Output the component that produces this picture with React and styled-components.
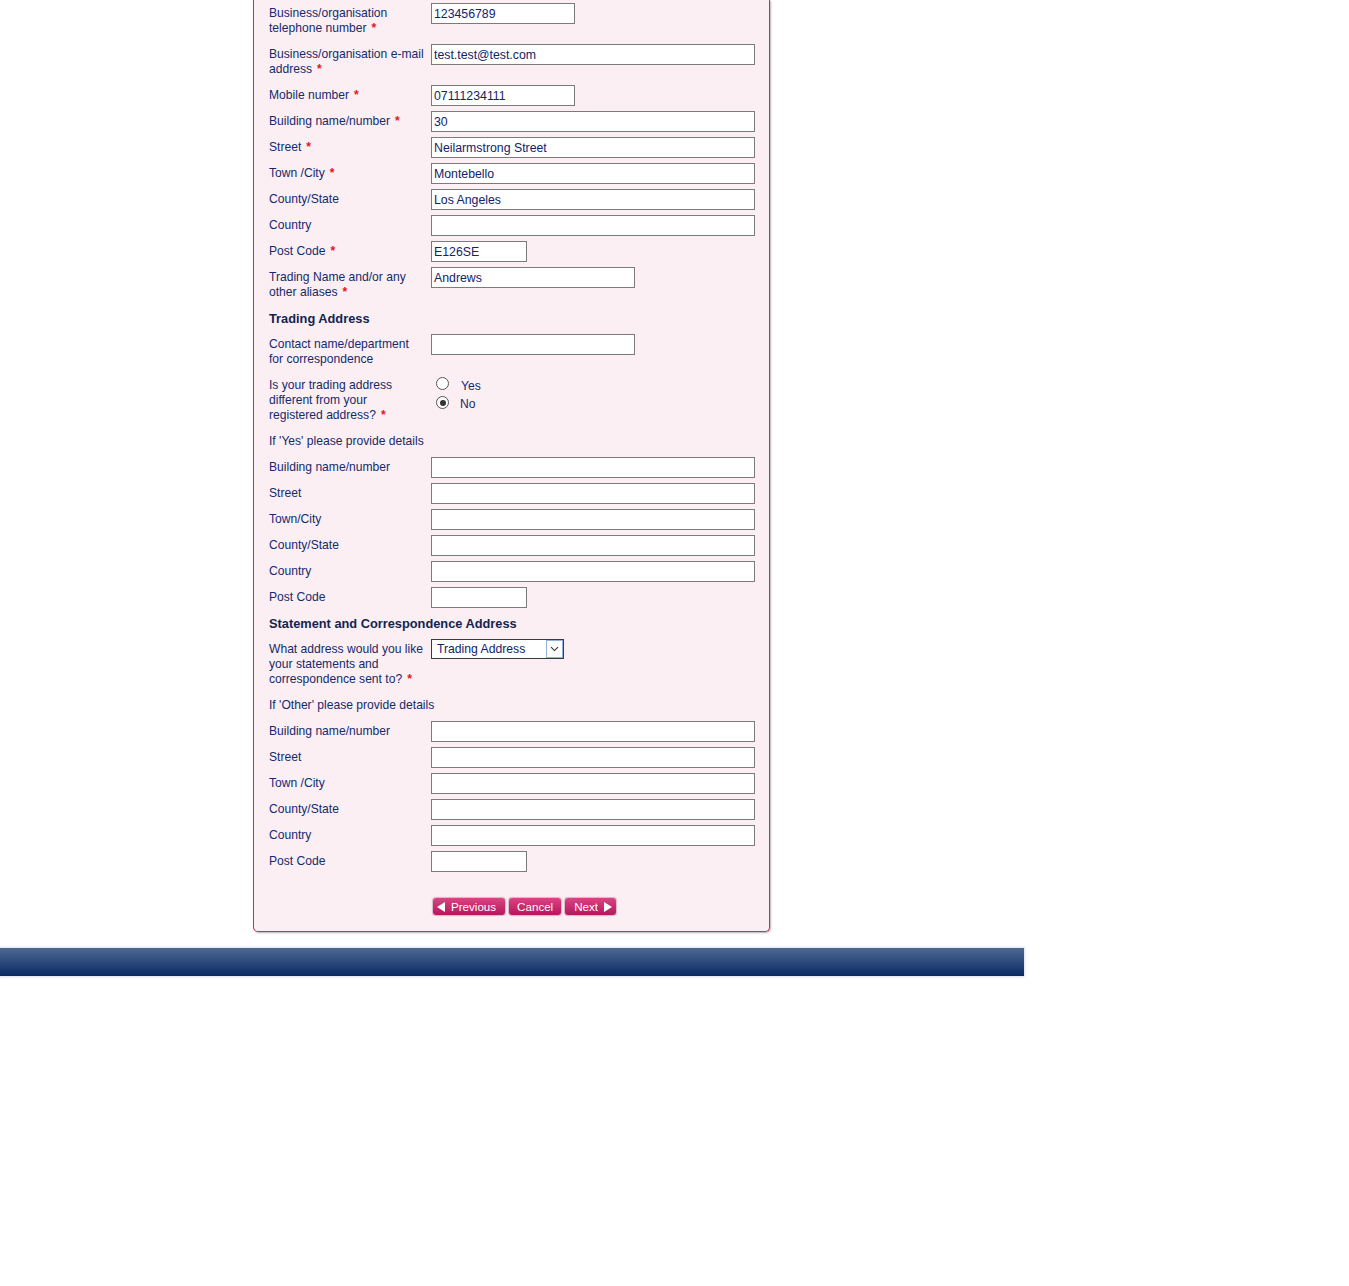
import React from "react";
import styled, { createGlobalStyle } from "styled-components";

const GlobalStyle = createGlobalStyle`
  body {
    margin: 0;
    background: #fff;
    font-family: "Liberation Sans", Arial, sans-serif;
  }
`;

const WIDTHS = { short: 144, long: 324, medium: 204, code: 96 };

const registered = [
  { label: ["Business/organisation", "telephone number"], req: true, size: "short", value: "123456789" },
  { label: ["Business/organisation e-mail", "address"], req: true, size: "long", value: "test.test@test.com" },
  { label: ["Mobile number"], req: true, size: "short", value: "07111234111" },
  { label: ["Building name/number"], req: true, size: "long", value: "30" },
  { label: ["Street"], req: true, size: "long", value: "Neilarmstrong Street" },
  { label: ["Town /City"], req: true, size: "long", value: "Montebello" },
  { label: ["County/State"], size: "long", value: "Los Angeles" },
  { label: ["Country"], size: "long", value: "" },
  { label: ["Post Code"], req: true, size: "code", value: "E126SE" },
  { label: ["Trading Name and/or any", "other aliases"], req: true, size: "medium", value: "Andrews" },
];

const tradingDetails = [
  { label: ["Building name/number"], size: "long" },
  { label: ["Street"], size: "long" },
  { label: ["Town/City"], size: "long" },
  { label: ["County/State"], size: "long" },
  { label: ["Country"], size: "long" },
  { label: ["Post Code"], size: "code" },
];

const otherDetails = [
  { label: ["Building name/number"], size: "long" },
  { label: ["Street"], size: "long" },
  { label: ["Town /City"], size: "long" },
  { label: ["County/State"], size: "long" },
  { label: ["Country"], size: "long" },
  { label: ["Post Code"], size: "code" },
];

// label lines, the red star sits on the last line
const FieldLabel = ({ lines, req }) => (
  <Label>
    {lines.map((l, i) => (
      <Line key={i}>
        {l}
        {req && i === lines.length - 1 && <Req>*</Req>}
      </Line>
    ))}
  </Label>
);

const FieldRow = ({ label, req, size, value }) => (
  <Row>
    <FieldLabel lines={label} req={req} />
    <TextBox $w={WIDTHS[size]}>{value}</TextBox>
  </Row>
);

const App = () => {
  return (
    <>
      <GlobalStyle />
      <Page>
        <Panel>
          {registered.map((r, i) => (
            <FieldRow key={i} {...r} />
          ))}

          <Heading>Trading Address</Heading>
          <FieldRow label={["Contact name/department", "for correspondence"]} size="medium" value="" />
          <Row>
            <FieldLabel
              lines={["Is your trading address", "different from your", "registered address?"]}
              req
            />
            <RadioGroup>
              <RadioItem>
                <Radio />
                <RadioText $shift={1}>Yes</RadioText>
              </RadioItem>
              <RadioItem>
                <Radio $checked />
                <RadioText>No</RadioText>
              </RadioItem>
            </RadioGroup>
          </Row>
          <Note>If 'Yes' please provide details</Note>
          {tradingDetails.map((r, i) => (
            <FieldRow key={i} {...r} value="" />
          ))}

          <Heading>Statement and Correspondence Address</Heading>
          <Row>
            <FieldLabel
              lines={["What address would you like", "your statements and", "correspondence sent to?"]}
              req
            />
            <Select>
              <SelectText>Trading Address</SelectText>
              <SelectArrow>
                <svg width="9" height="6" viewBox="0 0 9 6">
                  <path d="M1 1.2 L4.5 4.6 L8 1.2" fill="none" stroke="#333" strokeWidth="1.1" />
                </svg>
              </SelectArrow>
            </Select>
          </Row>
          <Note>If 'Other' please provide details</Note>
          {otherDetails.map((r, i) => (
            <FieldRow key={i} {...r} value="" />
          ))}

          <Buttons>
            <Button $pad="0 9px 0 4px">
              <Arrow viewBox="0 0 8 10">
                <path d="M8 0 L0 5 L8 10 Z" fill="#fff" />
              </Arrow>
              Previous
            </Button>
            <Button $pad="0 8px">Cancel</Button>
            <Button $pad="0 4px 0 9px">
              Next
              <Arrow viewBox="0 0 8 10">
                <path d="M0 0 L8 5 L0 10 Z" fill="#fff" />
              </Arrow>
            </Button>
          </Buttons>
        </Panel>
        <FooterBar />
      </Page>
    </>
  );
};

export default App;

// whole page column, footer bar spans this width
const Page = styled.div`
  width: 1024px;
  padding-bottom: 310px;
`;

// pink form panel, its top edge is scrolled off
const Panel = styled.div`
  margin-left: 253px;
  width: 500px;
  padding: 3px 0 16px 15px;
  background: #fbeff4;
  border: 1px solid #c2306c;
  border-top: none;
  border-radius: 0 0 5px 5px;
  box-shadow: 1px 1px 2px rgba(0, 0, 0, 0.3);
  font-size: 12.1px;
  color: #142a6c;
`;

const Row = styled.div`
  display: grid;
  grid-template-columns: 162px 1fr;
  align-items: start;
  margin-bottom: 5px;
  min-height: 21px;
`;

const Label = styled.div`
  line-height: 15px;
  padding: 3px 0 3px;
`;

const Line = styled.div`
  white-space: nowrap;
`;

const Req = styled.span`
  color: #e5141b;
  font-weight: bold;
  margin-left: 5px;
`;

const TextBox = styled.div`
  box-sizing: border-box;
  width: ${(p) => p.$w}px;
  height: 21px;
  border: 1px solid #7b7b7b;
  background: #fff;
  padding: 1px 2px 0;
  font-size: 12.3px;
  line-height: 18px;
  color: #11236a;
  white-space: nowrap;
  overflow: hidden;
`;

const Heading = styled.div`
  font-weight: bold;
  font-size: 12.8px;
  color: #13244f;
  line-height: 15px;
  padding: 3px 0 3px;
  margin-bottom: 5px;
`;

const Note = styled.div`
  line-height: 15px;
  padding: 3px 0 3px;
  margin-bottom: 5px;
`;

const RadioGroup = styled.div`
  display: flex;
  flex-direction: column;
  padding: 0 0 0 5px;
`;

const RadioItem = styled.div`
  display: flex;
  align-items: center;
  height: 19px;
`;

const Radio = styled.span`
  box-sizing: border-box;
  width: 13px;
  height: 13px;
  border-radius: 50%;
  border: 1px solid #555;
  background: #fff;
  position: relative;
  margin-top: ${(p) => (p.$checked ? "-2px" : "-3px")};
  &::after {
    content: "";
    display: ${(p) => (p.$checked ? "block" : "none")};
    position: absolute;
    left: 2.5px;
    top: 2.5px;
    width: 6px;
    height: 6px;
    border-radius: 50%;
    background: #333;
  }
`;

const RadioText = styled.span`
  margin-left: ${(p) => 11 + (p.$shift || 0)}px;
  margin-top: ${(p) => (p.$shift ? "4px" : "1px")};
  line-height: 15px;
`;

const Select = styled.div`
  box-sizing: border-box;
  display: flex;
  width: 133px;
  height: 20px;
  border: 1px solid #3a3a3a;
  background: #fff;
  color: #11236a;
`;

const SelectText = styled.div`
  flex: 1;
  padding-left: 5px;
  font-size: 12.2px;
  line-height: 18px;
  white-space: nowrap;
`;

const SelectArrow = styled.div`
  box-sizing: border-box;
  width: 17px;
  height: 18px;
  border: 1px solid #8fb3dc;
  background: #fff;
  display: flex;
  align-items: center;
  justify-content: center;
`;

const Buttons = styled.div`
  display: flex;
  gap: 4px;
  margin: 26px 0 0 164px;
`;

const Button = styled.div`
  display: flex;
  align-items: center;
  gap: 6px;
  height: 17px;
  padding: ${(p) => p.$pad};
  box-sizing: border-box;
  border-radius: 3px;
  background: linear-gradient(#d84583, #b7175c);
  box-shadow: 0 0 1px 1px rgba(150, 40, 90, 0.3);
  color: #fff;
  font-size: 11.6px;
  line-height: 17px;
`;

const Arrow = styled.svg`
  width: 8px;
  height: 10px;
`;

// dark blue strip at the bottom of the page
const FooterBar = styled.div`
  margin-top: 16px;
  height: 28px;
  background: linear-gradient(#4d6992, #092a63);
  box-shadow: 0 0 2px 1px rgba(180, 180, 220, 0.45);
`;
